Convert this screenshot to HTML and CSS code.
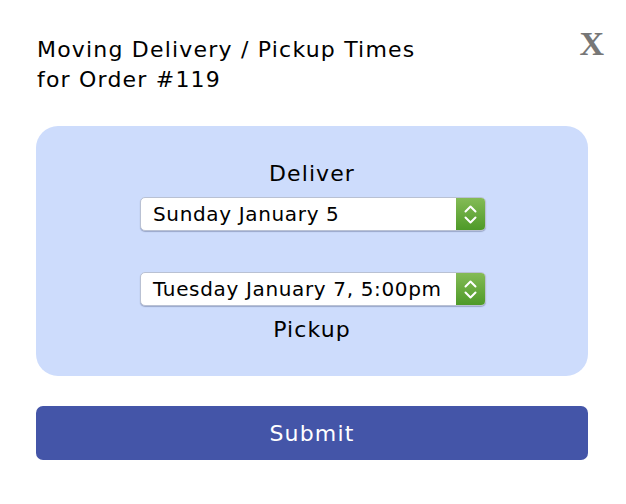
FILE: index.html
```html
<!DOCTYPE html>
<html>
<head>
<meta charset="utf-8">
<link rel="stylesheet" href="styles.css">
</head>
<body>
<div class="dialog">
  <div class="header">
    <h1 class="title">Moving Delivery / Pickup Times<br>for Order #119</h1>
    <span class="close">X</span>
  </div>
  <div class="panel">
    <div class="label">Deliver</div>
    <div class="select">
      <span class="value">Sunday January 5</span>
      <span class="stepper"><svg width="29" height="33" viewBox="0 0 29 33"><path d="M9.5 13.5 L14.5 8.5 L19.5 13.5 M9.5 19.5 L14.5 24.5 L19.5 19.5" fill="none" stroke="#fff" stroke-width="2" stroke-linecap="round" stroke-linejoin="round"/></svg></span>
    </div>
    <div class="select second">
      <span class="value">Tuesday January 7, 5:00pm</span>
      <span class="stepper"><svg width="29" height="33" viewBox="0 0 29 33"><path d="M9.5 13.5 L14.5 8.5 L19.5 13.5 M9.5 19.5 L14.5 24.5 L19.5 19.5" fill="none" stroke="#fff" stroke-width="2" stroke-linecap="round" stroke-linejoin="round"/></svg></span>
    </div>
    <div class="label pickup">Pickup</div>
  </div>
  <button class="submit">Submit</button>
</div>
</body>
</html>
```
FILE: styles.css
```css
html, body {
  margin: 0;
  padding: 0;
  background: #fff;
}
body {
  font-family: "DejaVu Sans", Verdana, sans-serif;
  color: #000;
}
.dialog {
  width: 552px;
  padding: 35px 38px 0 36px;
  display: flex;
  flex-direction: column;
}
.header {
  display: flex;
  justify-content: space-between;
  align-items: flex-start;
  height: 91px;
}
.title {
  margin: 0 0 0 1px;
  font-weight: normal;
  font-size: 22px;
  letter-spacing: 1.2px;
  line-height: 30px;
}
.close {
  font-family: "Liberation Serif", "Times New Roman", serif;
  font-weight: bold;
  font-size: 34px;
  line-height: 26px;
  color: #777;
  margin: -4px -16px 0 0;
}
.panel {
  background: #cddcfc;
  border-radius: 22px;
  height: 250px;
  box-sizing: border-box;
  padding-top: 34px;
  display: flex;
  flex-direction: column;
  align-items: center;
}
.label {
  font-size: 22px;
  letter-spacing: 1.1px;
  line-height: 28px;
  height: 28px;
}
.pickup {
  margin-top: 10px;
}
.select {
  margin-top: 9px;
  margin-left: 2px;
  width: 346px;
  height: 34px;
  box-sizing: border-box;
  background: #fff;
  border: 1px solid #b9c1d3;
  border-radius: 5px;
  box-shadow: 0 1px 1px rgba(60, 70, 110, 0.35);
  display: flex;
  align-items: stretch;
  overflow: hidden;
}
.select.second {
  margin-top: 41px;
}
.value {
  flex: 1;
  padding-left: 12px;
  font-size: 20px;
  letter-spacing: 0.65px;
  line-height: 32px;
  white-space: nowrap;
}
.stepper {
  width: 29px;
  background: linear-gradient(#84bb56, #4e9a28);
  display: flex;
  align-items: center;
  justify-content: center;
}
.stepper svg {
  display: block;
}
.submit {
  margin-top: 30px;
  height: 54px;
  border: none;
  border-radius: 7px;
  background: #4455a8;
  color: #fff;
  font-family: "DejaVu Sans", Verdana, sans-serif;
  font-size: 22px;
  letter-spacing: 1.2px;
  padding: 0;
}
```
